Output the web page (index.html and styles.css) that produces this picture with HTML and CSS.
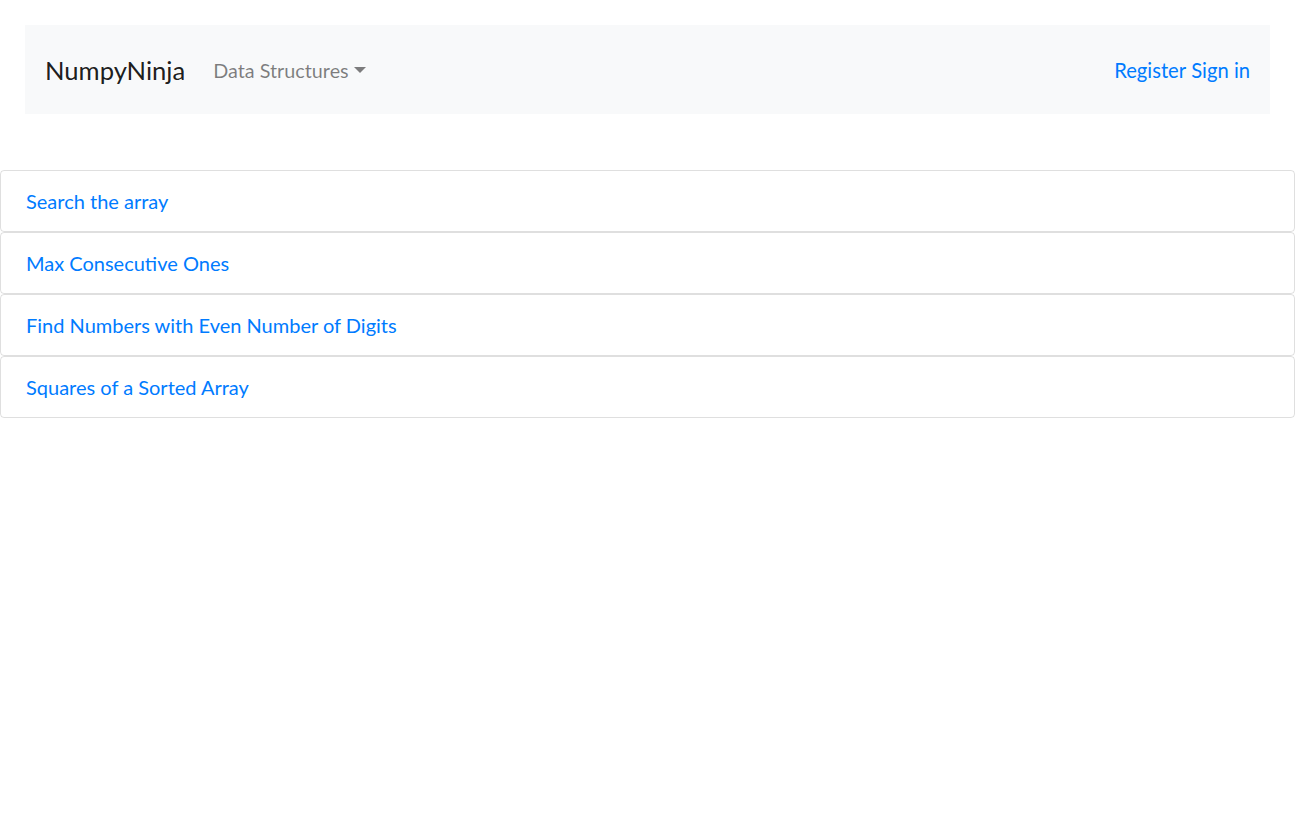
FILE: index.html
```html
<!DOCTYPE html>
<html lang="en">
<head>
<meta charset="utf-8">
<title>NumpyNinja</title>
<link rel="stylesheet" href="styles.css">
</head>
<body>
<div class="page">
  <nav class="navbar">
    <a class="brand" href="#">NumpyNinja</a>
    <div class="nav-item">
      <a class="nav-link dropdown-toggle" href="#">Data Structures</a>
    </div>
    <div class="nav-right">
      <a class="auth-link" href="#">Register</a> <a class="auth-link" href="#">Sign in</a>
    </div>
  </nav>
</div>
<div class="list">
  <div class="card"><a class="card-link" href="#">Search the array</a></div>
  <div class="card"><a class="card-link" href="#">Max Consecutive Ones</a></div>
  <div class="card"><a class="card-link" href="#">Find Numbers with Even Number of Digits</a></div>
  <div class="card"><a class="card-link" href="#">Squares of a Sorted Array</a></div>
</div>
</body>
</html>
```

FILE: styles.css
```css
* { box-sizing: border-box; }
html, body { margin: 0; padding: 0; background: #fff; }
body {
  font-family: "Lato", "Noto Sans", sans-serif;
  font-size: 20px;
  color: #212529;
}
a { text-decoration: none; }
.page { padding: 25px 25px 0 25px; }
.navbar {
  display: flex;
  align-items: center;
  height: 89px;
  padding: 0 20px;
  background: #f8f9fa;
}
.brand {
  font-size: 25.6px;
  color: rgba(0,0,0,.9);
  margin-right: 18px;
  line-height: 1;
  padding-top: 2px;
}
.nav-link {
  color: rgba(0,0,0,.5);
  padding: 0 10px;
  font-size: 19.8px;
}
.dropdown-toggle::after {
  content: "";
  display: inline-block;
  margin-left: 5px;
  vertical-align: 5px;
  border-top: 6px solid;
  border-left: 6px solid transparent;
  border-right: 6px solid transparent;
  border-bottom: 0;
}
.nav-right { margin-left: auto; }
.auth-link { color: #007bff; font-size: 20.2px; }
.list { margin-top: 56px; }
.card {
  border: 1px solid rgba(0,0,0,.125);
  border-radius: 4px;
  height: 62px;
  display: flex;
  align-items: center;
  padding: 0 25px;
}
.card-link { color: #007bff; font-size: 20px; }
```
